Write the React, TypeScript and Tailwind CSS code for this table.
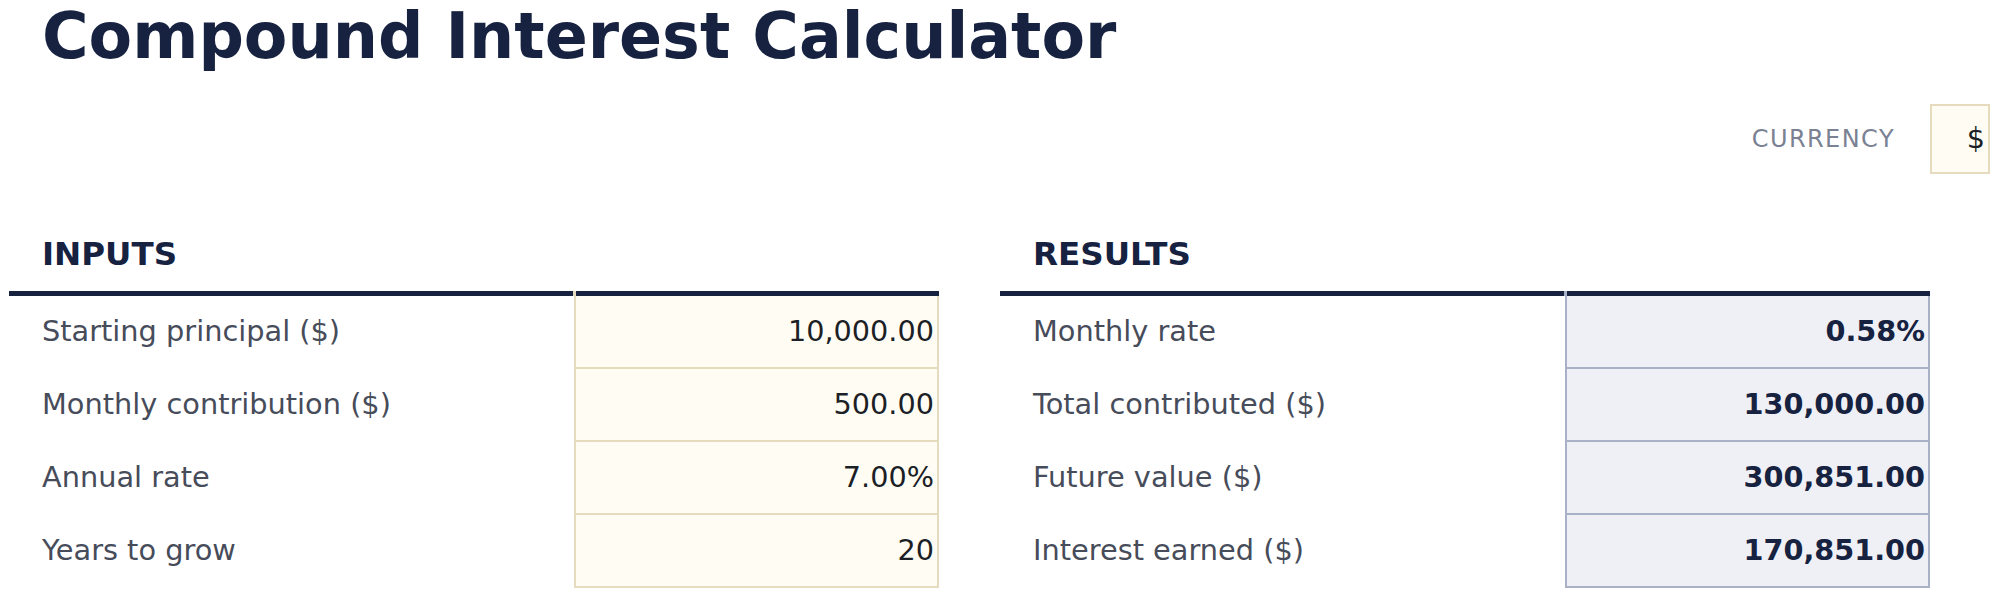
type Row = { label: string; value: string };

const inputs: Row[] = [
  { label: "Starting principal ($)", value: "10,000.00" },
  { label: "Monthly contribution ($)", value: "500.00" },
  { label: "Annual rate", value: "7.00%" },
  { label: "Years to grow", value: "20" },
];

const results: Row[] = [
  { label: "Monthly rate", value: "0.58%" },
  { label: "Total contributed ($)", value: "130,000.00" },
  { label: "Future value ($)", value: "300,851.00" },
  { label: "Interest earned ($)", value: "170,851.00" },
];

function Section({ title, rows, kind }: { title: string; rows: Row[]; kind: "input" | "result" }) {
  const isInput = kind === "input";
  return (
    <div className="flex w-[930px] flex-col">
      <div className="flex h-[117px] items-end pb-[18px] pl-[33px] text-[32.5px] font-bold leading-[38px] text-[#162240]">
        {title}
      </div>
      <div className="flex h-[5px]">
        <div className="w-[564px] bg-[#162240]" />
        <div className={`w-[3px] ${isInput ? "bg-[#e6dbbf]" : "bg-[#a9b1c7]"}`} />
        <div className="flex-1 bg-[#162240]" />
      </div>
      {rows.map((r) => (
        <div key={r.label} className="flex h-[73px]">
          <div className="flex w-[565px] items-center pb-[1px] pl-[33px] text-[28.8px] text-[#474c5a]">{r.label}</div>
          <div
            className={`flex flex-1 items-center justify-end border-x-2 border-b-2 pr-[3px] text-[28.7px] ${
              isInput
                ? "border-[#e6dbbf] bg-[#fffcf4] text-[#1c1f26]"
                : "border-[#a9b1c7] bg-[#eef0f6] font-bold text-[#162240]"
            }`}
          >
            {r.value}
          </div>
        </div>
      ))}
    </div>
  );
}

export default function App() {
  return (
    <div className="h-[598px] w-[2000px] overflow-hidden bg-white pl-[9px] font-['DejaVu_Sans',sans-serif]">
      <div className="h-[104px] pl-[33px]">
        <h1 className="text-[63.5px] font-bold leading-[72px] text-[#162240]">Compound Interest Calculator</h1>
      </div>
      <div className="flex h-[70px] w-[1981px] items-center justify-end">
        <span className="mr-[35px] text-[24px] tracking-[0.06em] text-[#7a8193]">CURRENCY</span>
        <div className="flex h-[70px] w-[60px] items-center justify-end border-2 border-[#e6dbbf] bg-[#fffcf4] pr-[3px] text-[28.7px] text-[#1c1f26]">
          $
        </div>
      </div>
      <div className="flex gap-[61px]">
        <Section title="INPUTS" rows={inputs} kind="input" />
        <Section title="RESULTS" rows={results} kind="result" />
      </div>
    </div>
  );
}
